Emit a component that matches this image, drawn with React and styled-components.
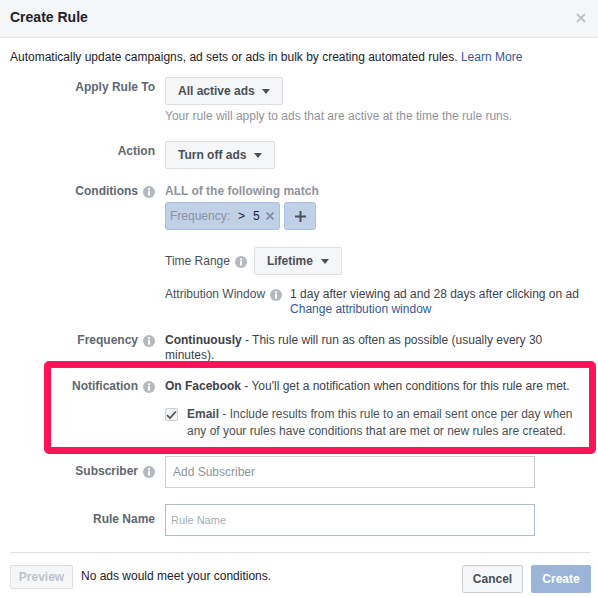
import styled, { createGlobalStyle } from "styled-components";

const GlobalStyle = createGlobalStyle`
  html, body {
    margin: 0;
    padding: 0;
    background: #fff;
  }
  body {
    font-family: "Liberation Sans", Arial, sans-serif;
    font-size: 12px;
    line-height: 15px;
    color: #1d2129;
  }
`;

function InfoIcon() {
  return (
    <InfoSvg viewBox="0 0 12 12">
      <circle cx="6" cy="6" r="6" fill="#b4b8bf" />
      <rect x="5" y="5" width="2" height="4.6" fill="#fff" />
      <rect x="5" y="2.4" width="2" height="1.8" fill="#fff" />
    </InfoSvg>
  );
}

function Select({ width, children }) {
  return (
    <SelectButton $width={width}>
      {children}
      <Caret />
    </SelectButton>
  );
}

export default function App() {
  return (
    <Dialog>
      <GlobalStyle />
      <Header>
        <Title>Create Rule</Title>
        <CloseIcon viewBox="0 0 10 10">
          <path d="M1 1 L9 9 M9 1 L1 9" stroke="#c0c3c8" strokeWidth="2" fill="none" />
        </CloseIcon>
      </Header>
      <Body>
        <Intro>
          Automatically update campaigns, ad sets or ads in bulk by creating automated rules.{" "}
          <TextLink>Learn More</TextLink>
        </Intro>

        <Row $top={12}>
          <Label $pad={3}>Apply Rule To</Label>
          <Content>
            <Select width={118}>All active ads</Select>
            <Helper>Your rule will apply to ads that are active at the time the rule runs.</Helper>
          </Content>
        </Row>

        <Row $top={17}>
          <Label $pad={3}>Action</Label>
          <Content>
            <Select width={110}>Turn off ads</Select>
          </Content>
        </Row>

        <Row $top={15}>
          <Label>
            Conditions <InfoIcon />
          </Label>
          <Content>
            <MutedStrong>ALL of the following match</MutedStrong>
            <ChipRow>
              <Chip>
                <ChipKey>Frequency:</ChipKey>
                <ChipValue>&gt;</ChipValue>
                <ChipValue>5</ChipValue>
                <ChipClose viewBox="0 0 10 10">
                  <path d="M1.5 1.5 L8.5 8.5 M8.5 1.5 L1.5 8.5" stroke="#7d8794" strokeWidth="1.6" fill="none" />
                </ChipClose>
              </Chip>
              <AddChip>
                <svg width="11" height="11" viewBox="0 0 11 11">
                  <path d="M5.5 0 V11 M0 5.5 H11" stroke="#4b4f56" strokeWidth="2" fill="none" />
                </svg>
              </AddChip>
            </ChipRow>
            <TimeRow>
              <SubLabel>
                Time Range <InfoIcon />
              </SubLabel>
              <Select width={88}>Lifetime</Select>
            </TimeRow>
            <AttributionRow>
              <SubLabel>
                Attribution Window <InfoIcon />
              </SubLabel>
              <div>
                <Dark>1 day after viewing ad and 28 days after clicking on ad</Dark>
                <br />
                <TextLink>Change attribution window</TextLink>
              </div>
            </AttributionRow>
          </Content>
        </Row>

        <Row $top={16}>
          <Label>
            Frequency <InfoIcon />
          </Label>
          <Content>
            <Dark>
              <b>Continuously</b> - This rule will run as often as possible (usually every 30 minutes).
            </Dark>
          </Content>
        </Row>

        <NotificationRow>
          <Highlight />
          <Label>
            Notification <InfoIcon />
          </Label>
          <Content>
            <Dark>
              <b>On Facebook</b> - You'll get a notification when conditions for this rule are met.
            </Dark>
            <EmailRow>
              <Checkbox>
                <svg width="11" height="10" viewBox="0 0 11 10">
                  <path d="M1 5.2 L4 8 L10 1.5" stroke="#4b4f56" strokeWidth="1.7" fill="none" />
                </svg>
              </Checkbox>
              <EmailText>
                <b>Email</b> - Include results from this rule to an email sent once per day when any of your rules have
                conditions that are met or new rules are created.
              </EmailText>
            </EmailRow>
          </Content>
        </NotificationRow>

        <Row $top={16}>
          <Label $pad={8}>
            Subscriber <InfoIcon />
          </Label>
          <Content>
            <FieldBox>
              <Placeholder>Add Subscriber</Placeholder>
            </FieldBox>
          </Content>
        </Row>

        <Row $top={16}>
          <Label $pad={8}>Rule Name</Label>
          <Content>
            <FieldBox $blue>
              <SmallPlaceholder>Rule Name</SmallPlaceholder>
            </FieldBox>
          </Content>
        </Row>

        <Footer>
          <FooterLeft>
            <PreviewButton>Preview</PreviewButton>
            <FooterNote>No ads would meet your conditions.</FooterNote>
          </FooterLeft>
          <FooterRight>
            <CancelButton>Cancel</CancelButton>
            <CreateButton>Create</CreateButton>
          </FooterRight>
        </Footer>
      </Body>
    </Dialog>
  );
}

const Dialog = styled.div`
  width: 598px;
  height: 597px;
  overflow: hidden;
  background: #fff;
`;

const Header = styled.header`
  height: 38px;
  box-sizing: border-box;
  padding: 0 12px 2px 10px;
  display: flex;
  align-items: center;
  justify-content: space-between;
  background: #f5f6f7;
  border-bottom: 1px solid #e5e5e5;
`;

const Title = styled.h1`
  margin: 0;
  font-size: 14px;
  font-weight: 700;
  color: #1d2129;
`;

const CloseIcon = styled.svg`
  width: 10px;
  height: 10px;
`;

const Body = styled.main`
  padding: 12px 7px 0 10px;
`;

const Intro = styled.p`
  margin: 0;
  color: #1d2129;
`;

const TextLink = styled.a`
  color: #365899;
`;

const Row = styled.section`
  display: flex;
  margin-top: ${(p) => p.$top}px;
`;

const NotificationRow = styled(Row)`
  position: relative;
  margin-top: 16px;
`;

const Highlight = styled.div`
  position: absolute;
  left: 34px;
  right: -5px;
  top: -18px;
  bottom: -14px;
  border: 7px solid #ff1459;
  border-radius: 5px;
  pointer-events: none;
`;

const Label = styled.div`
  width: 145px;
  flex: none;
  padding-top: ${(p) => p.$pad || 0}px;
  box-sizing: border-box;
  display: flex;
  justify-content: flex-end;
  align-items: flex-start;
  gap: 5px;
  font-weight: 700;
  color: #606770;
  white-space: nowrap;
`;

const InfoSvg = styled.svg`
  width: 12px;
  height: 12px;
  flex: none;
  margin-top: 2px;
`;

const Content = styled.div`
  flex: 1;
  min-width: 0;
  margin-left: 10px;
  padding-right: 10px;
`;

const SelectButton = styled.div`
  display: inline-flex;
  align-items: center;
  justify-content: space-between;
  box-sizing: border-box;
  width: ${(p) => p.$width}px;
  height: 28px;
  padding: 0 12px;
  background: #f5f6f7;
  border: 1px solid #dddfe2;
  border-radius: 2px;
  font-weight: 700;
  color: #4b4f56;
  white-space: nowrap;
`;

const Caret = styled.span`
  width: 0;
  height: 0;
  border-left: 4.5px solid transparent;
  border-right: 4.5px solid transparent;
  border-top: 5px solid #4b4f56;
`;

const Helper = styled.div`
  margin-top: 4px;
  color: #90949c;
`;

const MutedStrong = styled.div`
  font-weight: 700;
  color: #90949c;
`;

const ChipRow = styled.div`
  display: flex;
  gap: 4px;
  margin-top: 3px;
`;

const Chip = styled.div`
  display: flex;
  align-items: center;
  box-sizing: border-box;
  width: 115px;
  height: 28px;
  padding: 0 4px;
  background: #c0d0e7;
  border: 1px solid #a8bfdf;
  border-radius: 3px;
`;

const ChipKey = styled.span`
  color: #8a929f;
  margin-right: 8px;
`;

const ChipValue = styled.span`
  color: #1d2129;
  margin-right: 8px;
`;

const ChipClose = styled.svg`
  width: 10px;
  height: 10px;
  margin-left: -3px;
`;

const AddChip = styled.div`
  display: flex;
  align-items: center;
  justify-content: center;
  box-sizing: border-box;
  width: 32px;
  height: 28px;
  background: #c0d0e7;
  border: 1px solid #a8bfdf;
  border-radius: 3px;
`;

const TimeRow = styled.div`
  display: flex;
  align-items: center;
  gap: 7px;
  margin-top: 17px;
`;

const SubLabel = styled.div`
  display: flex;
  align-items: flex-start;
  gap: 5px;
  color: #4b4f56;
  white-space: nowrap;
`;

const AttributionRow = styled.div`
  display: flex;
  gap: 8px;
  margin-top: 12px;
  white-space: nowrap;
`;

const Dark = styled.div`
  display: inline;
  color: #3d4148;
`;

const EmailText = styled(Dark)`
  color: #4b4f56;
`;

const EmailRow = styled.div`
  display: flex;
  gap: 9px;
  margin-top: 12px;
  line-height: 17px;
  padding-right: 5px;
`;

const Checkbox = styled.div`
  display: flex;
  align-items: center;
  justify-content: center;
  flex: none;
  box-sizing: border-box;
  width: 13px;
  height: 13px;
  margin-top: 2px;
  background: #f5f6f7;
  border: 1px solid #ccd0d5;
  border-radius: 2px;
`;

const FieldBox = styled.div`
  display: flex;
  align-items: center;
  box-sizing: border-box;
  width: 370px;
  height: 32px;
  padding: 0 ${(p) => (p.$blue ? 5 : 7)}px;
  background: #fff;
  border: 1px solid ${(p) => (p.$blue ? "#adbbca" : "#ccd0d5")};
`;

const Placeholder = styled.span`
  color: #90949c;
`;

const SmallPlaceholder = styled.span`
  font-size: 11px;
  color: #a9adb3;
`;

const Footer = styled.footer`
  display: flex;
  justify-content: space-between;
  align-items: flex-start;
  margin-top: 16px;
  padding-top: 12px;
  border-top: 1px solid #dddfe2;
`;

const FooterLeft = styled.div`
  display: flex;
  align-items: center;
  gap: 8px;
`;

const FooterRight = styled.div`
  display: flex;
  gap: 8px;
`;

const FooterNote = styled.span`
  color: #1d2129;
  margin-top: -2px;
`;

const PreviewButton = styled.div`
  box-sizing: border-box;
  width: 63px;
  height: 24px;
  display: flex;
  align-items: center;
  justify-content: center;
  background: #f5f6f7;
  border: 1px solid #dddfe2;
  border-radius: 2px;
  font-weight: 700;
  color: #bec3c9;
`;

const CancelButton = styled.div`
  box-sizing: border-box;
  width: 61px;
  height: 28px;
  display: flex;
  align-items: center;
  justify-content: center;
  background: #f5f6f7;
  border: 1px solid #ccd0d5;
  border-radius: 2px;
  font-weight: 700;
  color: #4b4f56;
`;

const CreateButton = styled.div`
  box-sizing: border-box;
  width: 60px;
  height: 28px;
  display: flex;
  align-items: center;
  justify-content: center;
  background: #9cb4d8;
  border-radius: 2px;
  font-weight: 700;
  color: #fff;
`;
